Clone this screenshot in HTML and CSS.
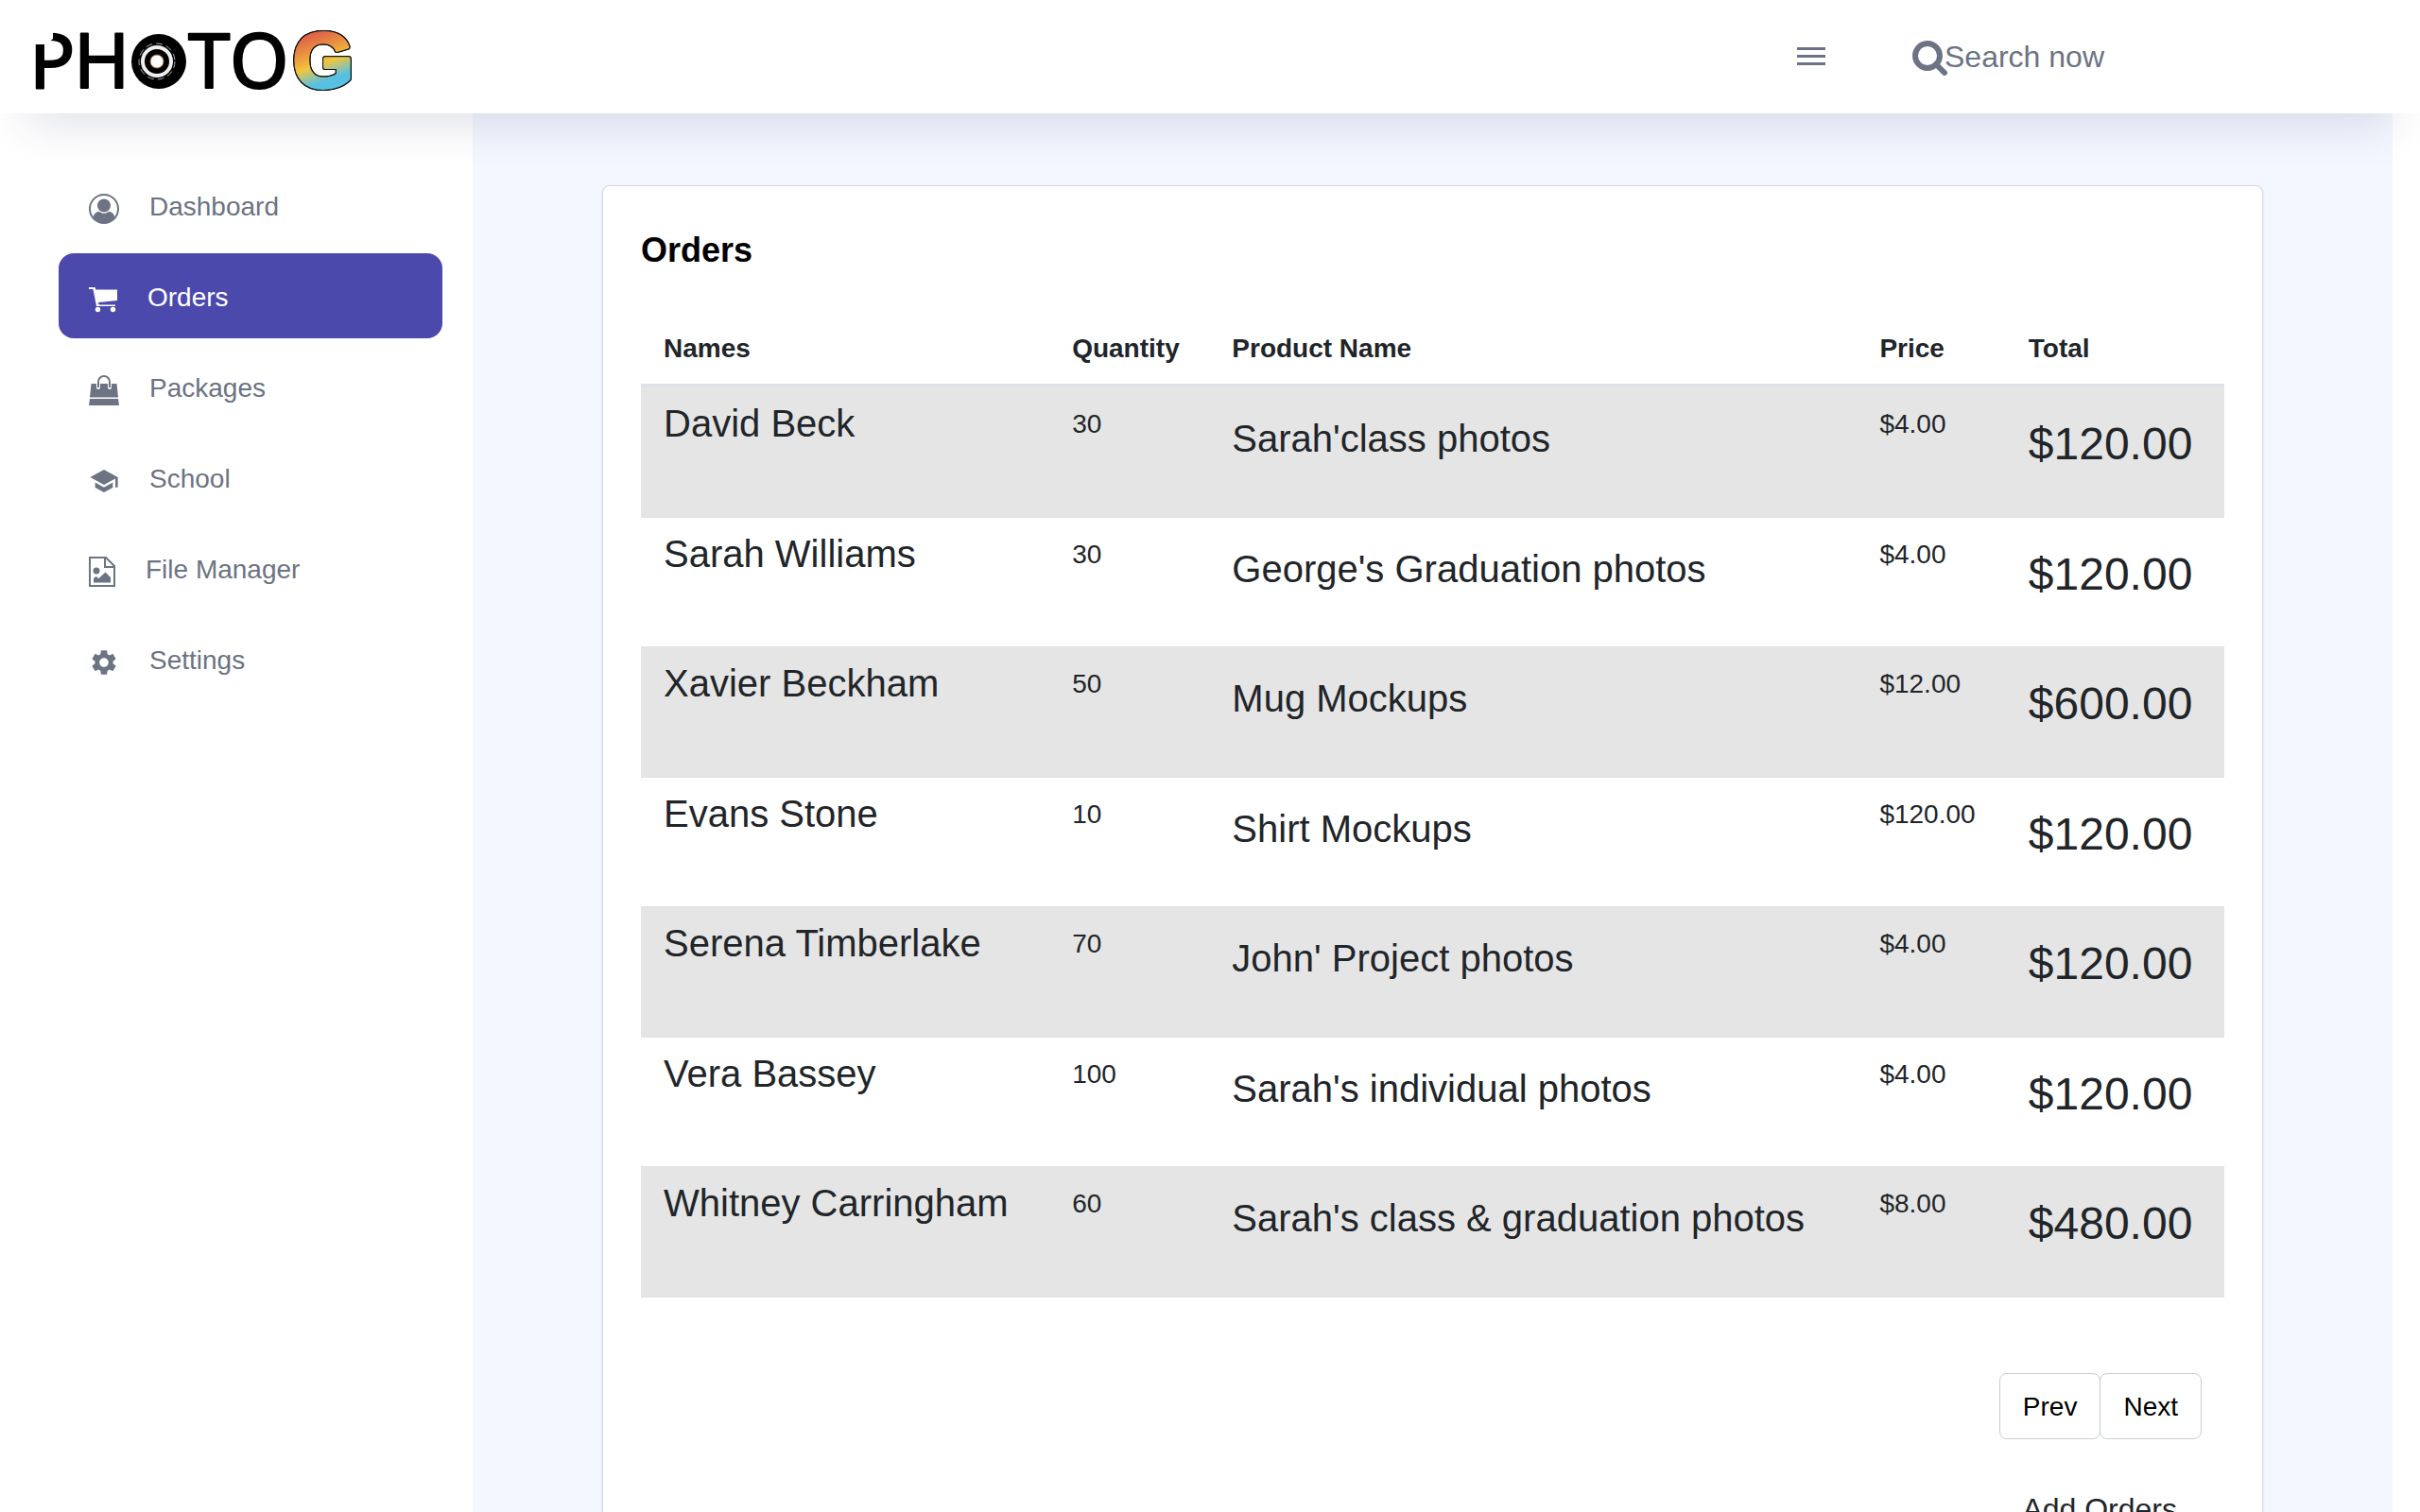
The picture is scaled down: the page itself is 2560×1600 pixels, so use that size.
FILE: index.html
```html
<!DOCTYPE html>
<html lang="en">
<head>
<meta charset="utf-8">
<meta name="viewport" content="width=device-width, initial-scale=1">
<title>PhotoG - Orders</title>
<link rel="stylesheet" href="styles.css">
</head>
<body>
<header class="topbar">
  <a class="brand" href="#" aria-label="PhotoG home">
    <svg class="logo" viewBox="-8 -24 360 116" aria-hidden="true">
      <defs>
        <linearGradient id="g-fill" x1="0.35" y1="0" x2="0.6" y2="1">
          <stop offset="0.15" stop-color="#de5a48"/>
          <stop offset="0.34" stop-color="#e88b42"/>
          <stop offset="0.54" stop-color="#f2c53d"/>
          <stop offset="0.74" stop-color="#58c1e2"/>
        </linearGradient>
      </defs>
      <text class="logo-letter" x="-4" y="65">P</text>
      <path fill="#fff" d="M-2 2H21V13L14 19H-2z"/>
      <text class="logo-letter" x="43" y="65">H</text>
      <circle cx="133" cy="37" r="29"/>
      <circle cx="131" cy="37" r="19" fill="none" stroke="#aaa" stroke-width="1" stroke-dasharray="7 4"/>
      <circle cx="131" cy="37" r="15" fill="none" stroke="#eee" stroke-width="4"/>
      <circle cx="131" cy="37" r="7" fill="#fff" stroke="#b5713c" stroke-width="1"/>
      <text class="logo-letter" x="164" y="65">T</text>
      <text class="logo-letter" x="208" y="65">O</text>
      <text class="logo-g" x="275" y="64">G</text>
    </svg>
  </a>
  <div class="tools">
    <button class="menu-button" type="button" aria-label="Toggle menu">
      <svg class="menu-icon" viewBox="0 0 30 22" aria-hidden="true"><path d="M0 1h30v3H0zM0 9h30v3H0zM0 17h30v3H0z"/></svg>
    </button>
    <label class="search">
      <svg class="search-icon" viewBox="0 0 38 38" aria-hidden="true"><circle cx="16" cy="16" r="13" fill="none" stroke="currentColor" stroke-width="6"/><path d="M25 25l9 9" stroke="currentColor" stroke-width="6" stroke-linecap="round"/></svg>
      <input class="search-input" type="text" placeholder="Search now" aria-label="Search now">
    </label>
  </div>
</header>
<div class="layout">
  <nav class="sidebar">
    <a class="nav-link" href="#">
      <svg class="nav-icon" width="32" height="32" viewBox="0 0 32 32" aria-hidden="true"><circle cx="16" cy="16" r="15" fill="none" stroke="currentColor" stroke-width="2"/><circle cx="16" cy="12.500" r="7"/><path d="M4.500 25.500C5 21.500 7.500 19 11 18.700c3 2.700 7 2.700 10 0 3.500.3 6 2.800 6.500 6.800A15 15 0 0 1 4.500 25.500z"/></svg>
      Dashboard
    </a>
    <a class="nav-link active" href="#" aria-current="page">
      <svg class="nav-icon" width="30" height="32" viewBox="0 0 30 32" aria-hidden="true"><path d="M0 3h6.500l.8 2.500H30v11.500L10 19l.5 2.500H28v1.500H8L4.500 5H0z"/><circle cx="9.500" cy="26.500" r="2.700"/><circle cx="25.500" cy="26.500" r="2.700"/></svg>
      Orders
    </a>
    <a class="nav-link" href="#">
      <svg class="nav-icon" width="32" height="32" viewBox="0 0 32 32" aria-hidden="true"><path d="M2.500 9h27L31 23.500H1zM1 25h30l1 7H0z"/><path d="M10 9v4M22 9v4" fill="none" stroke="#fff" stroke-width="4" stroke-linecap="round"/><path d="M10 13V7a6 6 0 0 1 12 0v6" fill="none" stroke="currentColor" stroke-width="2"/></svg>
      Packages
    </a>
    <a class="nav-link" href="#">
      <svg class="nav-icon" width="32" height="32" viewBox="0 0 24 24" aria-hidden="true"><path d="M5 13.180v4L12 21l7-3.820v-4L12 17l-7-3.820zM12 3L1 9l11 6 9-4.910V17h2V9L12 3z"/></svg>
      School
    </a>
    <a class="nav-link" href="#">
      <svg class="nav-icon" width="28" height="32" viewBox="0 0 28 32" aria-hidden="true"><path d="M1 1h17l9 9v21H1zM17 1v10h10" fill="none" stroke="currentColor" stroke-width="2"/><circle cx="8" cy="15" r="3.500"/><path d="M5 27.500V23l2.500-2 3 2L17.500 16.500 23 22v5.500z"/></svg>
      File Manager
    </a>
    <a class="nav-link" href="#">
      <svg class="nav-icon" width="32" height="32" viewBox="0 0 24 24" aria-hidden="true"><path d="M19.140 12.940c.04-.3.060-.61.060-.94 0-.32-.02-.64-.07-.94l2.030-1.580c.18-.14.23-.41.120-.61l-1.920-3.320c-.12-.22-.37-.29-.59-.22l-2.390.96c-.5-.38-1.030-.7-1.620-.94l-.36-2.540c-.04-.24-.24-.41-.48-.41h-3.840c-.24 0-.43.170-.47.410l-.36 2.540c-.59.240-1.130.570-1.620.940l-2.390-.96c-.22-.08-.47 0-.59.220L2.740 8.870c-.12.210-.08.470.120.610l2.030 1.580c-.05.3-.09.630-.09.940s.02.640.070.940l-2.030 1.580c-.18.140-.23.410-.12.610l1.920 3.320c.12.220.370.290.590.220l2.390-.96c.5.380 1.030.7 1.620.940l.36 2.540c.05.240.240.410.480.410h3.840c.24 0 .44-.17.470-.41l.36-2.540c.59-.24 1.130-.56 1.620-.94l2.390.96c.22.080.470 0 .59-.22l1.920-3.320c.12-.22.070-.47-.12-.61l-2.010-1.580zM12 15.600c-1.980 0-3.600-1.620-3.600-3.600s1.620-3.600 3.600-3.600 3.600 1.620 3.600 3.600-1.620 3.600-3.600 3.600z"/></svg>
      Settings
    </a>
  </nav>
  <main class="content">
    <section class="card">
      <h1 class="card-title">Orders</h1>
      <table class="orders">
        <colgroup><col class="col-name"><col class="col-quantity"><col class="col-product"><col class="col-price"><col class="col-total"></colgroup>
        <thead>
          <tr><th scope="col">Names</th><th scope="col">Quantity</th><th scope="col">Product Name</th><th scope="col">Price</th><th scope="col">Total</th></tr>
        </thead>
        <tbody>
          <tr><td class="name">David Beck</td><td>30</td><td class="product">Sarah'class photos</td><td>$4.00</td><td class="total">$120.00</td></tr>
          <tr><td class="name">Sarah Williams</td><td>30</td><td class="product">George's Graduation photos</td><td>$4.00</td><td class="total">$120.00</td></tr>
          <tr><td class="name">Xavier Beckham</td><td>50</td><td class="product">Mug Mockups</td><td>$12.00</td><td class="total">$600.00</td></tr>
          <tr><td class="name">Evans Stone</td><td>10</td><td class="product">Shirt Mockups</td><td>$120.00</td><td class="total">$120.00</td></tr>
          <tr><td class="name">Serena Timberlake</td><td>70</td><td class="product">John' Project photos</td><td>$4.00</td><td class="total">$120.00</td></tr>
          <tr><td class="name">Vera Bassey</td><td>100</td><td class="product">Sarah's individual photos</td><td>$4.00</td><td class="total">$120.00</td></tr>
          <tr><td class="name">Whitney Carringham</td><td>60</td><td class="product">Sarah's class &amp; graduation photos</td><td>$8.00</td><td class="total">$480.00</td></tr>
        </tbody>
      </table>
      <div class="pager">
        <button class="page-button" type="button">Prev</button>
        <button class="page-button" type="button">Next</button>
      </div>
      <div class="actions">
        <button class="add-button" type="button">Add Orders</button>
      </div>
    </section>
  </main>
</div>
</body>
</html>
```
FILE: styles.css
```css
* {
  box-sizing: border-box;
}

body {
  margin: 0;
  background: #fff;
  color: #212529;
  font: 28px/42px "Liberation Sans", Arial, sans-serif;
}

button,
input {
  font: inherit;
}

svg {
  display: block;
  fill: currentColor;
}

/* Top bar */
.topbar {
  position: relative;
  z-index: 1;
  display: flex;
  align-items: center;
  justify-content: space-between;
  height: 120px;
  padding: 0 159px 0 27px;
  background: #fff;
  box-shadow: 0 40px 48px -28px rgba(40, 50, 90, 0.14);
}

.brand {
  color: #000;
  padding-top: 4px;
}

.logo {
  width: 360px;
  height: 116px;
}

.logo-letter {
  font: 400 80px "Noto Sans", sans-serif;
  stroke: #000;
  stroke-width: 2px;
  stroke-linejoin: round;
}

.logo-g {
  font: 700 82px "Liberation Sans", Arial, sans-serif;
  fill: url(#g-fill);
  stroke: url(#g-fill);
  stroke-width: 4px;
  stroke-linejoin: round;
  filter: drop-shadow(1px 0 0 #111) drop-shadow(-1px 0 0 #111) drop-shadow(0 1px 0 #111) drop-shadow(0 -1px 0 #111);
}

.tools {
  display: flex;
  align-items: center;
  gap: 92px;
  color: #6c7383;
}

.menu-button {
  padding: 0;
  border: 0;
  background: none;
  color: inherit;
}

.menu-icon {
  width: 30px;
  height: 22px;
}

.search {
  display: flex;
  align-items: center;
}

.search-icon {
  width: 38px;
  height: 38px;
  margin: 4px -4px 0 0;
}

.search-input {
  width: 344px;
  height: 42px;
  padding: 0;
  border: 0;
  background: none;
  color: inherit;
  font-size: 32px;
}

.search-input::placeholder {
  color: inherit;
  opacity: 1;
}

/* Page columns */
.layout {
  display: flex;
  min-height: calc(100vh - 120px);
  padding-right: 29px;
}

.sidebar {
  display: flex;
  flex: 0 0 500px;
  flex-direction: column;
  gap: 6px;
  padding: 52px 32px 52px 62px;
}

.nav-link {
  display: flex;
  align-items: center;
  gap: 32px;
  padding: 26px 32px 22px;
  border-radius: 16px;
  color: #6c7383;
  text-decoration: none;
}

.nav-link.active {
  background: #4b49ac;
  color: #fff;
}

.nav-icon {
  flex: none;
  margin-top: 4px;
}

.content {
  flex: 1;
  padding: 76px 137px;
  background: #f3f7ff;
}

/* Orders card */
.card {
  padding: 47px 40px;
  border: 1px solid #d8d9dd;
  border-radius: 8px;
  background: #fff;
  box-shadow: 0 1px 3px rgba(0, 0, 0, 0.1);
}

.card-title {
  margin: 0 0 44px;
  color: #000;
  font-size: 36px;
  line-height: 42px;
}

.orders {
  width: 100%;
  border-spacing: 0;
  table-layout: fixed;
}

.col-name { width: 25.8%; }
.col-quantity { width: 10.1%; }
.col-product { width: 40.9%; }
.col-price { width: 9.4%; }
.col-total { width: 13.8%; }

.orders th,
.orders td {
  padding: 18px 24px 16px;
  text-align: left;
  vertical-align: top;
}

.orders th {
  border-bottom: 4px solid #dee2e6;
}

.orders td {
  height: 137px;
  border-bottom: 1px solid #dee2e6;
}

.orders tbody tr:nth-child(odd) td {
  height: 138px;
  background: #e5e5e5;
}

.orders .name {
  padding-top: 17px;
  font-size: 40px;
}

.orders .product {
  padding-top: 33px;
  font-size: 40px;
}

.orders .total {
  padding-top: 39px;
  font-size: 48px;
}

.pager {
  display: flex;
  justify-content: flex-end;
  padding: 80px 24px 0 0;
}

.page-button {
  padding: 14px 24px 12px;
  border: 1px solid #c8ced4;
  border-radius: 8px;
  background: #fff;
  color: #000;
}

.page-button + .page-button {
  margin-left: -1px;
}

.actions {
  display: flex;
  justify-content: flex-end;
  padding: 40px 50px 0 0;
}

.add-button {
  padding: 13px 0;
  border: 0;
  background: none;
  color: inherit;
  font-size: 32px;
}
```
